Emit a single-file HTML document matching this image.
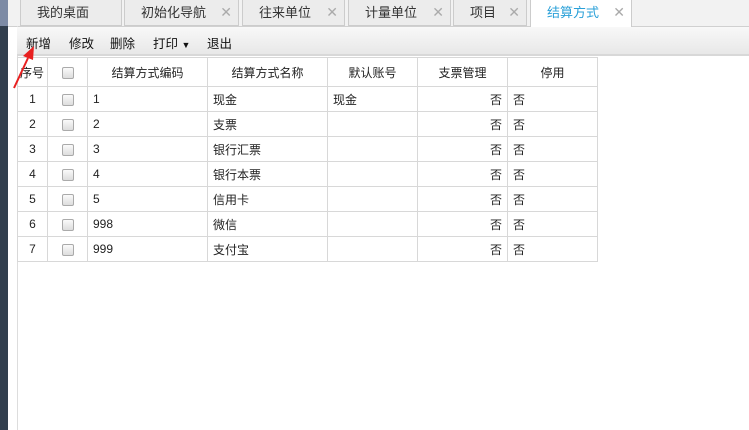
<!DOCTYPE html>
<html><head><meta charset="utf-8"><style>
*{margin:0;padding:0;box-sizing:border-box}
body{width:749px;height:430px;overflow:hidden;background:#fff;font-family:"Liberation Sans","Noto Sans CJK SC",sans-serif;font-size:12px;color:#222;position:relative}
.side{position:absolute;left:0;top:0;width:8px;height:430px;background:#323f4e}
.side:before{content:"";position:absolute;left:0;top:0;width:8px;height:26px;background:#7d8ba5}
.vl{position:absolute;left:17px;top:26px;width:1px;height:404px;background:#ddd}
.tabs{position:absolute;left:8px;top:0;width:741px;height:27px;background:#f2f2f2;border-bottom:1px solid #d0d0d0}
.tab{position:absolute;top:0;height:26px;border:1px solid #ccc;border-top:none;background:#ececec;font-size:13px;line-height:25px;color:#333;padding-left:16px}
.tab i{font-style:normal;color:#aaa;position:absolute;right:6px;top:0;font-size:14px}
.tab.a{background:#fff;color:#2aa0d8;height:27px;border-bottom:none}
.tb{position:absolute;left:17px;top:27px;width:732px;height:29px;background:linear-gradient(#f8f8f8,#e8e8e8);border-bottom:2px solid #d8d8d8}
.tb span{position:absolute;top:6px;font-size:12.5px;color:#111}
table{position:absolute;left:17px;top:57px;border-collapse:collapse}
td{border:1px solid #d8d8d8;height:25px;font-size:12px;padding:0 5px}
tr.h td{height:29px;text-align:center}
.c{text-align:center}.r{text-align:right}
.cb{display:inline-block;width:12px;height:12px;border:1px solid #aaa;border-radius:2px;background:linear-gradient(#fafafa,#ddd);vertical-align:middle}
</style></head><body>
<div class="side"></div>
<div class="tabs">
<div class="tab" style="left:12px;width:102px">我的桌面</div>
<div class="tab" style="left:116px;width:115px">初始化导航<i>✕</i></div>
<div class="tab" style="left:234px;width:103px">往来单位<i>✕</i></div>
<div class="tab" style="left:340px;width:103px">计量单位<i>✕</i></div>
<div class="tab" style="left:445px;width:74px">项目<i>✕</i></div>
<div class="tab a" style="left:522px;width:102px">结算方式<i>✕</i></div>
</div>
<div class="vl"></div>
<div class="tb">
<span style="left:9px">新增</span><span style="left:52px">修改</span><span style="left:93px">删除</span><span style="left:136px">打印 <b style="font-size:9px">▼</b></span><span style="left:190px">退出</span>
</div>
<table>
<tr class="h"><td style="width:30px;padding:0 2px;text-align:left">序号</td><td style="width:40px"><span class="cb"></span></td><td style="width:120px">结算方式编码</td><td style="width:120px">结算方式名称</td><td style="width:90px">默认账号</td><td style="width:90px">支票管理</td><td style="width:90px">停用</td></tr>
<tr><td class="c">1</td><td class="c"><span class="cb"></span></td><td>1</td><td>现金</td><td>现金</td><td class="r">否</td><td>否</td></tr>
<tr><td class="c">2</td><td class="c"><span class="cb"></span></td><td>2</td><td>支票</td><td></td><td class="r">否</td><td>否</td></tr>
<tr><td class="c">3</td><td class="c"><span class="cb"></span></td><td>3</td><td>银行汇票</td><td></td><td class="r">否</td><td>否</td></tr>
<tr><td class="c">4</td><td class="c"><span class="cb"></span></td><td>4</td><td>银行本票</td><td></td><td class="r">否</td><td>否</td></tr>
<tr><td class="c">5</td><td class="c"><span class="cb"></span></td><td>5</td><td>信用卡</td><td></td><td class="r">否</td><td>否</td></tr>
<tr><td class="c">6</td><td class="c"><span class="cb"></span></td><td>998</td><td>微信</td><td></td><td class="r">否</td><td>否</td></tr>
<tr><td class="c">7</td><td class="c"><span class="cb"></span></td><td>999</td><td>支付宝</td><td></td><td class="r">否</td><td>否</td></tr>
</table>
<svg style="position:absolute;left:0;top:0" width="60" height="100"><line x1="14" y1="88" x2="28" y2="58" stroke="#e82020" stroke-width="2"/><polygon points="34,46 23,56 33,60" fill="#e82020"/></svg>
</body></html>
